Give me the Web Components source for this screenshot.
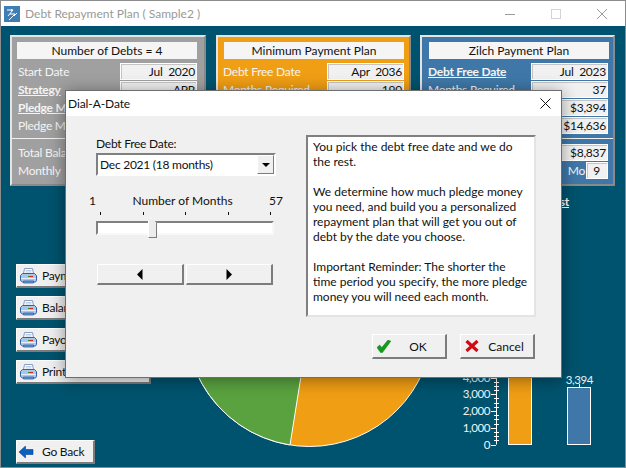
<!DOCTYPE html>
<html>
<head>
<meta charset="utf-8">
<title>Debt Repayment Plan</title>
<style>
    html, body { margin: 0; padding: 0; }
    body { width: 626px; height: 468px; overflow: hidden; font: 12px Lato, "Noto Sans", sans-serif; letter-spacing: -.25px; }
</style>
</head>
<body>
<app-window heading="Debt Repayment Plan ( Sample2 )">
    <div style="display:flex">
        <plan-panel tone="grey" heading="Number of Debts = 4" style="width:196px;--title-x:5px;--field-r:7px;--label-x:6px">
            <plan-row label="Start Date" value="Jul  2020"></plan-row>
            <plan-row label="Strategy" value="APR" link></plan-row>
            <plan-row label="Pledge M" link></plan-row>
            <plan-row label="Pledge M"></plan-row>
            <plan-row slot="totals" label="Total Balance"></plan-row>
            <plan-row slot="totals" label="Monthly"></plan-row>
        </plan-panel>
        <plan-panel tone="orange" heading="Minimum Payment Plan" style="width:195px;margin-left:10px;--title-x:6px;--field-r:5px;--label-x:5px">
            <plan-row label="Debt Free Date" value="Apr  2036"></plan-row>
            <plan-row label="Months Required" value="190"></plan-row>
            <plan-row></plan-row>
            <plan-row></plan-row>
        </plan-panel>
        <plan-panel tone="blue" heading="Zilch Payment Plan" style="width:195px;margin-left:9px;--title-x:7px;--field-r:5px;--label-x:6px">
            <plan-row label="Debt Free Date" value="Jul  2023" link></plan-row>
            <plan-row label="Months Required" value="37"></plan-row>
            <plan-row value="$3,394"></plan-row>
            <plan-row value="$14,636"></plan-row>
            <plan-row slot="totals" value="$8,837"></plan-row>
            <plan-row slot="totals" label="Mo" value="9" short></plan-row>
        </plan-panel>
    </div>
    <div style="display:flex">
        <div style="width:135px;margin:78px 34px 0 6px;display:flex;flex-direction:column;gap:8px;align-items:flex-start">
            <tool-button icon="print" style="width:135px">Payment Plan</tool-button>
            <tool-button icon="print" style="width:135px">Balances</tool-button>
            <tool-button icon="print" style="width:135px">Payoffs</tool-button>
            <tool-button icon="print" style="width:135px">Print All</tool-button>
            <tool-button icon="back" style="width:79px;margin-top:48px">Go Back</tool-button>
        </div>
        <pie-chart style="margin-top:13px"></pie-chart>
        <div style="margin:9px 0 0 37px;width:130px">
            <div style="height:14px;line-height:14px;width:99px;text-align:right;color:#fff;font-weight:700;text-decoration:underline">List</div>
            <bar-chart></bar-chart>
        </div>
    </div>
</app-window>

<dial-a-date>You pick the debt free date and we do<br>the rest.<br><br>We determine how much pledge money<br>you need, and build you a personalized<br>repayment plan that will get you out of<br>debt by the date you choose.<br><br>Important Reminder: The shorter the<br>time period you specify, the more pledge<br>money you will need each month.</dial-a-date>

<script>
const ICONS = {
    print: `<svg width="17" height="16" viewBox="0 0 17 16">
        <path d="M4.5 .5h8l1 5h-10z" fill="#fff" stroke="#7f9fc4"/>
        <path d="M5.5 2.5h6M5.5 4h6" stroke="#b9c9dd"/>
        <path d="M2.5 5.5h12l2 2v5l-1 1.5h-13l-2-1.5v-5z" fill="#a9c6e8" stroke="#2f62a8"/>
        <path d="M1 10.5h15" stroke="#e6eef8"/>
        <path d="M8 8.5h2" stroke="#1f9a2c"/><path d="M10 8.5h3" stroke="#c9261d"/>
        <path d="M3.5 13h10v2h-10z" fill="#6f97c9" stroke="#2f62a8" stroke-width=".8"/>
    </svg>`,
    back: `<svg width="15" height="12" viewBox="0 0 15 12">
        <path d="M0 6 6.5 0v3.5H14v5H6.5V12z" fill="#0b5fc0" stroke="#0a3f8a" stroke-width=".6"/>
    </svg>`,
    ok: `<svg width="14" height="13" viewBox="0 0 14 13">
        <path d="M0 7.5 2.6 5l2.2 2.6L11 0l2.8 1.2L5.4 12.6H3.6z" fill="#119c1c" stroke="#0a7a14" stroke-width=".5"/>
    </svg>`,
    cancel: `<svg width="14" height="12" viewBox="0 0 14 12">
        <path d="M1.5 1 12.5 11M12.5 1 1.5 11" stroke="#d10a12" stroke-width="3.2"/>
    </svg>`,
    left: `<svg width="6" height="11" viewBox="0 0 6 11"><path d="M5.5 0v11L0 5.5z" fill="#000"/></svg>`,
    right: `<svg width="6" height="11" viewBox="0 0 6 11"><path d="M.5 0v11L6 5.5z" fill="#000"/></svg>`
};

// Ventana principal con su barra de titulo
class AppWindow extends HTMLElement {
    constructor() {
        super();
        this.attachShadow({ mode: 'open' });
    }

    connectedCallback() {
        this.shadowRoot.innerHTML = `
            <style>
                :host {
                    display: flex;
                    flex-direction: column;
                    box-sizing: border-box;
                    width: 626px;
                    height: 468px;
                    border: 1px solid #8c8c8c;
                    background: #00536e;
                    overflow: hidden;
                }
                .bar {
                    display: flex;
                    align-items: center;
                    height: 25px;
                    flex: none;
                    background: #fff;
                    color: #999;
                    font-size: 12px;
                    letter-spacing: 0;
                }
                .logo { margin: 0 5px 0 3px; display: block; }
                .title { flex: 1; }
                .ctl { width: 46px; display: flex; justify-content: center; }
                .body { flex: 1; padding: 9px 0 0 9px; }
            </style>
            <div class="bar">
                <svg class="logo" width="16" height="16" viewBox="0 0 16 16">
                    <rect width="16" height="16" fill="#3d7fb5"/>
                    <path d="M3 4h6L4 10M6 8h5l-6 6M8 3l-1 2M13 7l-3 3" stroke="#fff" fill="none"/>
                </svg>
                <span class="title">${this.getAttribute('heading')}</span>
                <span class="ctl"><svg width="10" height="10"><path d="M0 5.5h10" stroke="#9a9a9a"/></svg></span>
                <span class="ctl"><svg width="10" height="10"><rect x=".5" y=".5" width="9" height="9" fill="none" stroke="#d4d4d4"/></svg></span>
                <span class="ctl"><svg width="10" height="10"><path d="M0 0l10 10M10 0L0 10" stroke="#9a9a9a"/></svg></span>
            </div>
            <div class="body"><slot></slot></div>
        `;
    }
}

// Panel de un plan: titulo, filas y totales
class PlanPanel extends HTMLElement {
    constructor() {
        super();
        this.attachShadow({ mode: 'open' });
    }

    connectedCallback() {
        const tones = { grey: '#a0a0a0', orange: '#f09e14', blue: '#3f78a8' };
        this.shadowRoot.innerHTML = `
            <style>
                :host {
                    display: block;
                    box-sizing: border-box;
                    height: 151px;
                    flex: none;
                    background: ${tones[this.getAttribute('tone')]};
                    border: 2px solid;
                    border-color: #e4e4e4 #8a8a8a #8a8a8a #e4e4e4;
                    color: #f4f4f4;
                }
                .title {
                    box-sizing: border-box;
                    height: 17px;
                    line-height: 17px;
                    width: 180px;
                    margin: 5px 0 4px var(--title-x);
                    background: #f5f5f5;
                    color: #111;
                    text-align: center;
                    font-size: 12px;
                    letter-spacing: 0;
                }
                .rows { display: flex; flex-direction: column; gap: 1px; }
                .totals {
                    margin-top: 4px;
                    padding-top: 5px;
                    border-top: 1px solid #f0f0f0;
                    display: flex;
                    flex-direction: column;
                    gap: 1px;
                }
            </style>
            <div class="title">${this.getAttribute('heading')}</div>
            <div class="rows"><slot></slot></div>
            <div class="totals"><slot name="totals"></slot></div>
        `;
    }
}

// Fila: etiqueta a la izquierda, valor a la derecha
class PlanRow extends HTMLElement {
    constructor() {
        super();
        this.attachShadow({ mode: 'open' });
    }

    connectedCallback() {
        const label = this.getAttribute('label') || '';
        const value = this.getAttribute('value') || '';
        const short = this.hasAttribute('short');
        this.shadowRoot.innerHTML = `
            <style>
                :host { display: flex; align-items: center; height: 17px; padding: 0 var(--field-r) 0 var(--label-x); }
                .label { flex: 1; white-space: nowrap; overflow: hidden; ${short ? 'text-align: right; padding-right: 1px;' : ''} }
                .link { font-weight: 700; text-decoration: underline; }
                .value {
                    box-sizing: border-box;
                    width: ${short ? '22px' : '77px'};
                    height: 17px;
                    line-height: 15px;
                    flex: none;
                    padding-right: ${short ? '7px' : '1px'};
                    background: #f1f1f1;
                    border: 1px solid #fff;
                    box-shadow: inset 1px 1px #c4c4c4;
                    color: #111;
                    text-align: right;
                    white-space: pre;
                }
            </style>
            <span class="label ${this.hasAttribute('link') ? 'link' : ''}">${label}</span>
            <span class="value">${value}</span>
        `;
    }
}

// Boton con relieve e icono
class ToolButton extends HTMLElement {
    constructor() {
        super();
        this.attachShadow({ mode: 'open' });
    }

    connectedCallback() {
        const icon = this.getAttribute('icon');
        this.shadowRoot.innerHTML = `
            <style>
                :host {
                    display: flex;
                    align-items: center;
                    box-sizing: border-box;
                    height: 24px;
                    flex: none;
                    background: #f0f0f0;
                    border: 2px solid;
                    border-width: 1px 2px 2px 1px;
                    border-color: #fff #7c7c7c #7c7c7c #fff;
                    color: #111;
                    white-space: nowrap;
                }
                .icon { width: 25px; padding-left: ${icon === 'back' ? '2px' : '3px'}; box-sizing: border-box; display: flex; flex: none; }
            </style>
            <span class="icon">${ICONS[icon]}</span><slot></slot>
        `;
    }
}

class PieChart extends HTMLElement {
    constructor() {
        super();
        this.attachShadow({ mode: 'open' });
    }

    connectedCallback() {
        this.shadowRoot.innerHTML = `
            <style>:host { display: block; width: 248px; height: 248px; flex: none; } svg { display: block; }</style>
            <svg width="248" height="248" viewBox="0 0 248 248">
                <circle cx="124.5" cy="124" r="123.5" fill="#f09e14" stroke="#fff"/>
                <path d="M124.5 124 105 246A123.5 123.5 0 0 1 10 78z" fill="#5aa23f" stroke="#fff"/>
            </svg>
        `;
    }
}

class BarChart extends HTMLElement {
    constructor() {
        super();
        this.attachShadow({ mode: 'open' });
    }

    connectedCallback() {
        const zero = 235.5;
        const perK = 16.75;
        let ticks = '';
        let labels = '';
        for (let v = 0; v <= 4000; v += 250) {
            const y = Math.round(zero - v / 1000 * perK) + 0.5;
            const major = v % 1000 === 0;
            ticks += `<path d="M${major ? 21 : 24} ${y}h5" stroke="#fff"/>`;
            if (major) {
                const text = v === 0 ? '0' : (v / 1000) + ',000';
                labels += `<text x="20" y="${y + 3.5}" text-anchor="end">${text}</text>`;
            }
        }
        this.shadowRoot.innerHTML = `
            <style>
                :host { display: block; }
                svg { display: block; }
                text { fill: #eef4f7; font: 11.5px Lato, "Noto Sans", sans-serif; letter-spacing: -.4px; }
            </style>
            <svg width="130" height="240" viewBox="0 0 130 240" style="overflow:visible">
                <path d="M26.5 150V${zero}" stroke="#fff"/>
                ${ticks}
                ${labels}
                <rect x="38.5" y="100.5" width="23" height="135" fill="#f09e14" stroke="#fff"/>
                <rect x="97.5" y="178.5" width="23" height="57" fill="#3f78a8" stroke="#fff"/>
                <path d="M109.5 175v3" stroke="#fff"/>
                <text x="109.5" y="174.5" text-anchor="middle">3,394</text>
            </svg>
        `;
    }
}

// Dialogo modal sobre la ventana
class DialADate extends HTMLElement {
    constructor() {
        super();
        this.attachShadow({ mode: 'open' });
    }

    connectedCallback() {
        this.shadowRoot.innerHTML = `
            <style>
                :host {
                    position: absolute;
                    left: 65px;
                    top: 90px;
                    box-sizing: border-box;
                    width: 497px;
                    height: 288px;
                    display: flex;
                    flex-direction: column;
                    background: #f0f0f0;
                    border: 1px solid #6e6e6e;
                    box-shadow: 0 2px 16px rgba(0, 0, 0, .4);
                    color: #111;
                }
                .head {
                    height: 25px;
                    flex: none;
                    background: #fff;
                    display: flex;
                    align-items: center;
                    justify-content: space-between;
                    padding: 0 10px 0 2px;
                    letter-spacing: -.1px;
                }
                .main { display: flex; height: 181px; margin-top: 19px; padding-left: 30px; }
                .left { width: 210px; flex: none; }
                .cap { height: 18px; line-height: 17px; }
                .combo {
                    box-sizing: border-box;
                    width: 180px;
                    height: 23px;
                    display: flex;
                    align-items: center;
                    justify-content: space-between;
                    background: #fff;
                    border: 2px solid;
                    border-color: #808080 #fff #fff #808080;
                    padding-left: 2px;
                }
                .drop {
                    box-sizing: border-box;
                    width: 17px;
                    height: 19px;
                    background: #f0f0f0;
                    border: 1px solid;
                    border-color: #fff #7c7c7c #7c7c7c #fff;
                    display: flex;
                    align-items: center;
                    justify-content: center;
                }
                .drop i { border: 4px solid transparent; border-top: 4px solid #000; border-bottom: 0; }
                .scale { display: flex; justify-content: space-between; margin: 16px 0 0 -7px; width: 194px; height: 17px; line-height: 17px; letter-spacing: 0; }
                .ticks { display: flex; justify-content: space-between; width: 171px; margin: 3px 0 0 4px; height: 3px; }
                .ticks i { width: 1px; height: 3px; background: #111; }
                .track {
                    position: relative;
                    box-sizing: border-box;
                    width: 178px;
                    height: 14px;
                    margin-top: 6px;
                    background: #fff;
                    border: 2px solid;
                    border-color: #808080 #f8f8f8 #f8f8f8 #808080;
                }
                .thumb {
                    position: absolute;
                    left: 50px;
                    top: -5px;
                    box-sizing: border-box;
                    width: 9px;
                    height: 20px;
                    background: #ececec;
                    border: 1px solid;
                    border-color: #fff #7c7c7c #7c7c7c #fff;
                    clip-path: polygon(0 3px, 3px 0, 100% 5px, 100% 100%, 0 100%);
                }
                .steps { display: flex; gap: 2px; margin: 29px 0 0 1px; }
                .steps span {
                    box-sizing: border-box;
                    width: 87px;
                    height: 21px;
                    display: flex;
                    align-items: center;
                    justify-content: center;
                    background: #f0f0f0;
                    border: 1px solid;
                    border-width: 1px 2px 2px 1px;
                    border-color: #fff #7c7c7c #7c7c7c #fff;
                }
                .note {
                    box-sizing: border-box;
                    width: 230px;
                    height: 182px;
                    background: #fff;
                    border: 2px solid;
                    border-color: #808080 #e4e4e4 #e4e4e4 #808080;
                    padding: 2px 0 0 5px;
                    line-height: 15px;
                    letter-spacing: 0;
                    white-space: nowrap;
                }
                .foot { display: flex; justify-content: flex-end; gap: 13px; margin: 18px 26px 0 0; }
                .foot span {
                    box-sizing: border-box;
                    width: 75px;
                    height: 25px;
                    display: flex;
                    align-items: center;
                    position: relative;
                    background: #f0f0f0;
                    border: 1px solid;
                    border-width: 1px 2px 2px 1px;
                    border-color: #fff #7c7c7c #7c7c7c #fff;
                    padding-left: 4px;
                    letter-spacing: 0;
                }
                .foot b { font-weight: 400; flex: 1; text-align: center; }
            </style>
            <div class="head">
                <span>Dial-A-Date</span>
                <svg width="11" height="11"><path d="M.5 .5l10 10M10.5 .5l-10 10" stroke="#111"/></svg>
            </div>
            <div class="main">
                <div class="left">
                    <div class="cap">Debt Free Date:</div>
                    <div class="combo">Dec 2021 (18 months)<span class="drop"><i></i></span></div>
                    <div class="scale"><span>1</span><span>Number of Months</span><span>57</span></div>
                    <div class="ticks"><i></i><i></i><i></i><i></i><i></i></div>
                    <div class="track"><div class="thumb"></div></div>
                    <div class="steps"><span>${ICONS.left}</span><span>${ICONS.right}</span></div>
                </div>
                <div class="note"><slot></slot></div>
            </div>
            <div class="foot">
                <span>${ICONS.ok}<b>OK</b></span>
                <span>${ICONS.cancel}<b>Cancel</b></span>
            </div>
        `;
    }
}

customElements.define('app-window', AppWindow);
customElements.define('plan-panel', PlanPanel);
customElements.define('plan-row', PlanRow);
customElements.define('tool-button', ToolButton);
customElements.define('pie-chart', PieChart);
customElements.define('bar-chart', BarChart);
customElements.define('dial-a-date', DialADate);
</script>
</body>
</html>
